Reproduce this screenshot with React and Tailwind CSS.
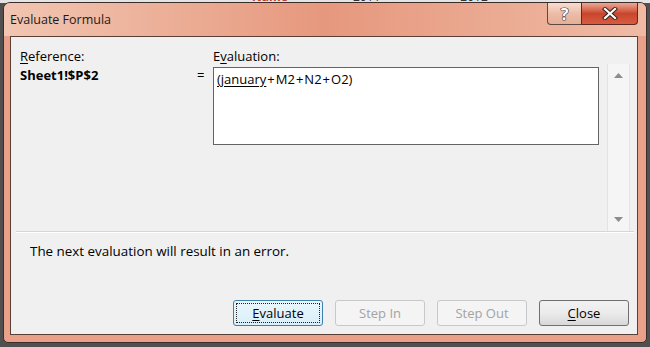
import React from "react";

const ui = "font-['Open_Sans','Noto_Sans',sans-serif]";

// Classic Win7 dialog push button
const Btn = ({ children, disabled, focus }) => {
  const base =
    "w-[90px] h-[26px] rounded-[3px] border flex items-center justify-center text-[13px] leading-none";
  if (disabled) {
    return <div className={`${base} border-[#c6c9cc] bg-[#f4f4f4] text-[#a3a3a3]`}>{children}</div>;
  }
  if (focus) {
    return (
      <div className={`${base} border-[#3c7fb1] bg-gradient-to-b from-[#eaf6fd] to-[#d9effa] p-[2px] text-black`}>
        <div className="w-full h-full border border-dotted border-[#222] flex items-center justify-center">{children}</div>
      </div>
    );
  }
  return (
    <div className={`${base} border-[#707070] bg-gradient-to-b from-[#f2f2f2] via-[#ebebeb] to-[#d8d8d8] text-black`}>
      {children}
    </div>
  );
};

export default function App() {
  return (
    <div className={`w-[650px] h-[347px] bg-[#505050] overflow-hidden flex flex-col ${ui}`}>
      {/* spreadsheet peeking out above the dialog */}
      <div className="h-[3px] bg-[#e4e4e4] overflow-hidden shrink-0">
        <div className="flex text-[12px] leading-none -translate-y-[9px]">
          <span className="ml-[252px] text-[#c0392b] font-bold">Name</span>
          <span className="ml-[65px] text-[#333]">2011</span>
          <span className="ml-[80px] text-[#333]">2012</span>
        </div>
      </div>

      {/* window */}
      <div className="ml-[3px] w-[644px] h-[341px] rounded-t-[7px] rounded-b-[5px] border border-[#3b2e2a] bg-[#e9a189] flex flex-col pl-[6px] pr-[8px] pb-[7px] -mt-px overflow-hidden">
        {/* title bar */}
        <div className="h-[33px] -ml-[6px] -mr-[8px] pl-[6px] pr-[8px] bg-gradient-to-r from-[#f1c6b2] via-[#e6987e] to-[#efbaa4] flex items-start justify-between shrink-0">
          <div className="pt-[9px] text-[12.5px] leading-[16px] text-[#1b1b1b]">Evaluate Formula</div>
          <div className="flex">
            <div className="w-[34px] h-[22px] rounded-bl-[4px] border border-t-0 border-[#5b4a44] border-r-0 bg-gradient-to-b from-[#f7dccf] via-[#ecbda8] to-[#e6ae96] flex items-center justify-center">
              <span className="text-[16px] font-bold leading-none text-white [-webkit-text-stroke:1.2px_#3b3b3b] [paint-order:stroke]">?</span>
            </div>
            <div className="w-[57px] h-[22px] rounded-br-[4px] border border-t-0 border-[#5b2a22] bg-gradient-to-b from-[#eba893] via-[#c9452d] to-[#d65c40] flex items-center justify-center">
              <svg width="16" height="13" viewBox="0 0 16 13">
                <path d="M3 2 L13 11 M13 2 L3 11" stroke="#3a2420" strokeWidth="4.2" strokeLinecap="square" />
                <path d="M3 2 L13 11 M13 2 L3 11" stroke="#ffffff" strokeWidth="2.2" strokeLinecap="square" />
              </svg>
            </div>
          </div>
        </div>

        {/* client area */}
        <div className="flex-1 border border-[#5a3f36] bg-[#f0f0f0] flex flex-col text-[13px] text-black">
          <div className="h-[194px] flex pl-[9px] shrink-0">
            <div className="w-[177px] pt-[11px] flex flex-col">
              <div className="leading-[16px] h-[19px]">
                <span className="underline underline-offset-2">R</span>eference:
              </div>
              <div className="leading-[16px] font-bold">Sheet1!$P$2</div>
            </div>
            <div className="w-[16px] pt-[30px] leading-[16px]">=</div>
            <div className="w-[386px] pt-[11px] flex flex-col">
              <div className="leading-[16px] h-[19px]">
                E<span className="underline underline-offset-2">v</span>aluation:
              </div>
              <div className="h-[78px] border border-[#646464] bg-white px-[3px] pt-[3px] leading-[16px]">
                <span className="underline underline-offset-2">(january</span>
                <span className="px-[1px]">+</span>M2<span className="px-[1px]">+</span>N2
                <span className="px-[1px]">+</span>O2)
              </div>
            </div>
            <div className="ml-[8px] mt-[27px] w-[23px] border-x border-[#e3e3e3] bg-[#f5f5f5] flex flex-col items-center justify-between py-[9px]">
              <svg width="9" height="5" viewBox="0 0 9 5"><path d="M0 5 L4.5 0 L9 5 Z" fill="#8c8c8c" /></svg>
              <svg width="9" height="5" viewBox="0 0 9 5"><path d="M0 0 L4.5 5 L9 0 Z" fill="#8c8c8c" /></svg>
            </div>
          </div>
          <div className="ml-[5px] mr-[3px] border-t border-[#d6d6d6] border-b border-b-white" />
          <div className="pl-[19px] pt-[10px] leading-[16px] text-[13.4px]">The next evaluation will result in an error.</div>
          <div className="flex-1" />
          <div className="flex justify-end gap-[12px] pr-[8px] pb-[8px]">
            <Btn focus>
              <span className="underline underline-offset-2">E</span>valuate
            </Btn>
            <Btn disabled>Step In</Btn>
            <Btn disabled>Step Out</Btn>
            <Btn>
              <span className="underline underline-offset-2">C</span>lose
            </Btn>
          </div>
        </div>
      </div>
    </div>
  );
}
